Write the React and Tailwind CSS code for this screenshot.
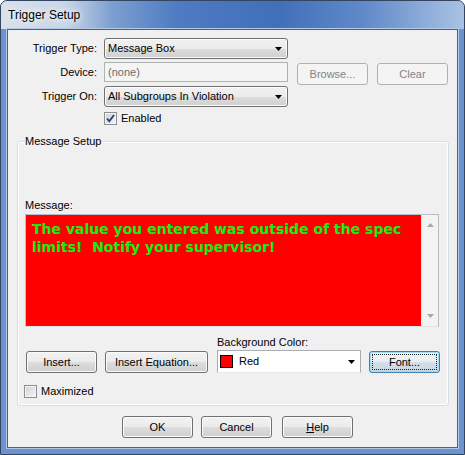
import React from 'react';

function Arrow({ color = '#000000' }) {
  return (
    <svg width="7" height="4" viewBox="0 0 7 4">
      <path d="M0 0H7L3.5 4Z" fill={color} />
    </svg>
  );
}

function Button({ children, className = '', disabled = false }) {
  return (
    <div
      className={`flex h-[22px] items-center justify-center rounded-[3px] border ${
        disabled
          ? 'border-[#adb2b5] bg-[#f4f4f4] text-[#838383]'
          : 'border-[#707070] bg-[linear-gradient(#f2f2f2_0%,#ebebeb_50%,#dddddd_51%,#cfcfcf_100%)] text-black shadow-[inset_0_0_0_1px_#fbfbfb]'
      } ${className}`}
    >
      {children}
    </div>
  );
}

function Combo({ children }) {
  return (
    <div className="flex h-[21px] w-[184px] items-center justify-between rounded-[3px] border border-[#707070] bg-[linear-gradient(#f2f2f2_0%,#ebebeb_50%,#dddddd_51%,#cfcfcf_100%)] pl-[3px] pr-[5px] shadow-[inset_0_0_0_1px_#fbfbfb]">
      <span>{children}</span>
      <Arrow />
    </div>
  );
}

function CheckBox({ checked }) {
  return (
    <div className="flex h-[13px] w-[13px] items-center justify-center border border-[#8e8f8f] bg-[linear-gradient(135deg,#cdd1d6,#f6f6f6)] shadow-[inset_0_0_0_1px_#f4f4f4]">
      {checked && (
        <svg width="11" height="11" viewBox="0 0 11 11">
          <path d="M2 5.5L4.3 8.3L9 2" fill="none" stroke="#2b3f7c" strokeWidth="1.9" />
        </svg>
      )}
    </div>
  );
}

export default function App() {
  return (
    <div className="flex h-[455px] w-[465px] flex-col rounded-t-[7px] border border-[#34465f] bg-[#6a93cf] font-['Liberation_Sans',Arial,sans-serif] text-[11px] leading-[13px] text-black">
      {/* Title bar */}
      <div className="flex h-[28px] items-center rounded-t-[6px] bg-[linear-gradient(90deg,#d9e1ea_0%,#c9d6e7_14%,#7d9fd0_24%,#4e7bc2_38%,#416fb9_60%,#5f89c9_78%,#a9c2e3_100%)] pl-[7px]">
        <span className="font-['Liberation_Sans',Arial,sans-serif] text-[12px] [text-shadow:0_0_6px_#ffffff,0_0_10px_#ffffff]">
          Trigger Setup
        </span>
      </div>

      {/* Client area */}
      <div className="ml-[6px] flex h-[419px] w-[451px] flex-col border border-[#4d6282] bg-[#f0f0f0] shadow-[0_0_0_1px_#b3c8e7]">
        {/* Trigger Type */}
        <div className="mt-[8px] flex h-[21px] items-center">
          <div className="w-[89px] text-right">Trigger Type:</div>
          <div className="ml-[7px]">
            <Combo>Message Box</Combo>
          </div>
        </div>

        {/* Device */}
        <div className="mt-[3px] flex h-[23px] items-start">
          <div className="flex h-[20px] w-[89px] items-center justify-end text-[#000000]">Device:</div>
          <div className="ml-[7px] flex h-[20px] w-[184px] items-center border border-[#adb2b5] bg-[#f4f4f4] pl-[3px] text-[#6d6d6d]">
            (none)
          </div>
          <Button disabled className="ml-[9px] mt-[1px] w-[71px]">
            Browse...
          </Button>
          <Button disabled className="ml-[9px] mt-[1px] w-[71px]">
            Clear
          </Button>
        </div>

        {/* Trigger On */}
        <div className="mt-[1px] flex h-[21px] items-center">
          <div className="w-[89px] text-right">Trigger On:</div>
          <div className="ml-[7px]">
            <Combo>All Subgroups In Violation</Combo>
          </div>
        </div>

        {/* Enabled */}
        <div className="ml-[96px] mt-[5px] flex h-[13px] items-center">
          <CheckBox checked />
          <span className="ml-[4px]">Enabled</span>
        </div>

        {/* Message Setup group */}
        <div className="relative ml-[9px] mt-[16px] flex w-[432px] flex-col rounded-[3px] border border-[#d5dfe5] pb-[7px] shadow-[inset_0_0_0_1px_#ffffff]">
          <span className="absolute -top-[7px] left-[6px] bg-[#f0f0f0] px-[1px]">Message Setup</span>

          <div className="ml-[7px] mt-[57px] h-[13px]">Message:</div>

          <div className="ml-[7px] mt-[2px] flex h-[113px] w-[414px] border border-[#b9bdc3] border-b-[#dfe3e8]">
            <div className="flex-1 bg-[#ff0000] pl-[6px] pt-[5px] font-['DejaVu_Sans',Verdana,sans-serif] text-[14px] font-bold leading-[18px] whitespace-nowrap text-[#14ee14]">
              The value you entered was outside of the spec
              <br />
              limits!&nbsp; Notify your supervisor!
            </div>
            <div className="flex w-[17px] flex-col items-center justify-between border-l border-[#e9e9e9] bg-[#f3f3f3] pb-[8px] pt-[8px]">
              <svg width="7" height="4" viewBox="0 0 7 4">
                <path d="M0 4H7L3.5 0Z" fill="#a7a7a7" />
              </svg>
              <Arrow color="#a7a7a7" />
            </div>
          </div>

          <div className="ml-[8px] mt-[9px] flex items-end">
            <Button className="w-[71px]">Insert...</Button>
            <Button className="ml-[8px] w-[103px]">Insert Equation...</Button>
            <div className="ml-[9px] flex w-[144px] flex-col">
              <div className="h-[14px]">Background Color:</div>
              <div className="flex h-[23px] items-center border border-[#abadb3] border-b-[#e3e9ef] bg-white pl-[2px] pr-[5px]">
                <div className="h-[13px] w-[13px] border border-black bg-[#ff0000]" />
                <span className="ml-[6px] flex-1">Red</span>
                <Arrow />
              </div>
            </div>
            <div className="ml-[8px] flex h-[22px] w-[71px] items-center justify-center rounded-[3px] border border-[#3c7fb1] bg-[linear-gradient(#f2f6f9_0%,#e6edf2_50%,#d5e0e8_51%,#c8d6e0_100%)] p-[2px] shadow-[inset_0_0_0_1px_#a3dcf7]">
              <div className="flex h-full w-full items-center justify-center border border-dotted border-[#222222]">
                Font...
              </div>
            </div>
          </div>

          <div className="ml-[6px] mt-[12px] flex h-[13px] items-center">
            <CheckBox checked={false} />
            <span className="ml-[4px]">Maximized</span>
          </div>
        </div>

        {/* Dialog buttons */}
        <div className="ml-[114px] mt-[10px] flex">
          <Button className="w-[71px]">OK</Button>
          <Button className="ml-[8px] w-[71px]">Cancel</Button>
          <Button className="ml-[10px] w-[71px]">
            <span>
              <span className="underline">H</span>elp
            </span>
          </Button>
        </div>
      </div>
    </div>
  );
}
